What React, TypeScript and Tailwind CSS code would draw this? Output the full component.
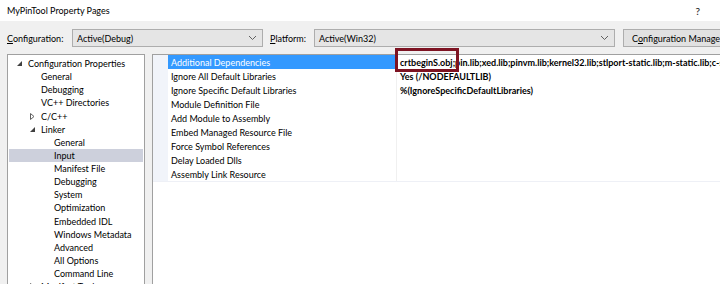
import React from "react";

const font = { fontFamily: 'Lato, "Noto Sans", sans-serif' };

function Chevron() {
  return (
    <svg width="9" height="6" viewBox="0 0 9 6" className="shrink-0">
      <path d="M1 1 L4.5 4.5 L8 1" fill="none" stroke="#606060" strokeWidth="1" />
    </svg>
  );
}

function Expanded() {
  return (
    <svg width="5" height="5" viewBox="0 0 5 5" className="shrink-0">
      <path d="M5 0 L5 5 L0 5 Z" fill="#404040" />
    </svg>
  );
}

function Collapsed() {
  return (
    <svg width="5" height="7" viewBox="0 0 5 7" className="shrink-0">
      <path d="M0.5 0.5 L4 3.5 L0.5 6.5 Z" fill="none" stroke="#606060" strokeWidth="1" />
    </svg>
  );
}

type TreeItem = { label: string; level: number; icon?: "exp" | "col"; selected?: boolean };

const tree: TreeItem[] = [
  { label: "Configuration Properties", level: 0, icon: "exp" },
  { label: "General", level: 1 },
  { label: "Debugging", level: 1 },
  { label: "VC++ Directories", level: 1 },
  { label: "C/C++", level: 1, icon: "col" },
  { label: "Linker", level: 1, icon: "exp" },
  { label: "General", level: 2 },
  { label: "Input", level: 2, selected: true },
  { label: "Manifest File", level: 2 },
  { label: "Debugging", level: 2 },
  { label: "System", level: 2 },
  { label: "Optimization", level: 2 },
  { label: "Embedded IDL", level: 2 },
  { label: "Windows Metadata", level: 2 },
  { label: "Advanced", level: 2 },
  { label: "All Options", level: 2 },
  { label: "Command Line", level: 2 },
  { label: "Manifest Tool", level: 1, icon: "col" },
];

const rows: { name: string; value: string }[] = [
  {
    name: "Additional Dependencies",
    value:
      "crtbeginS.obj;pin.lib;xed.lib;pinvm.lib;kernel32.lib;stlport-static.lib;m-static.lib;c-static.lib;os-apis.lib",
  },
  { name: "Ignore All Default Libraries", value: "Yes (/NODEFAULTLIB)" },
  { name: "Ignore Specific Default Libraries", value: "%(IgnoreSpecificDefaultLibraries)" },
  { name: "Module Definition File", value: "" },
  { name: "Add Module to Assembly", value: "" },
  { name: "Embed Managed Resource File", value: "" },
  { name: "Force Symbol References", value: "" },
  { name: "Delay Loaded Dlls", value: "" },
  { name: "Assembly Link Resource", value: "" },
];

export default function App() {
  return (
    <div
      className="relative w-[720px] h-[284px] overflow-hidden bg-[#f0f0f0] text-[9px] text-black leading-none"
      style={font}
    >
      {/* Title bar */}
      <div className="h-[21px] bg-white flex items-center justify-between pl-[7px] pr-[20px]">
        <span className="text-[9px]">MyPinTool Property Pages</span>
        <span className="text-[10px] font-semibold text-[#333]">?</span>
      </div>

      {/* Config row */}
      <div className="flex items-center h-[18px] mt-[8px] pl-[7px] whitespace-nowrap">
        <span className="w-[65px] shrink-0">
          <span className="underline">C</span>onfiguration:
        </span>
        <div className="w-[191px] shrink-0 h-[18px] border border-[#adadad] bg-[#e5e5e5] flex items-center justify-between pl-[4px] pr-[5px]">
          <span>Active(Debug)</span>
          <Chevron />
        </div>
        <span className="ml-[7px] w-[44px] shrink-0">
          <span className="underline">P</span>latform:
        </span>
        <div className="w-[301px] shrink-0 h-[18px] border border-[#adadad] bg-[#e5e5e5] flex items-center justify-between pl-[4px] pr-[5px]">
          <span>Active(Win32)</span>
          <Chevron />
        </div>
        <div className="ml-[8px] shrink-0 w-[130px] h-[18px] border border-[#adadad] bg-[#e1e1e1] flex items-center pl-[8px]">
          <span>
            C<span className="underline">o</span>nfiguration Manager...
          </span>
        </div>
      </div>

      {/* Panels */}
      <div className="flex mt-[7px] pl-[7px] gap-[7px] items-start">
        {/* Tree */}
        <div className="w-[138px] h-[260px] shrink-0 bg-white border border-[#a0a0a0] pt-[2px] px-[1px] overflow-hidden">
          {tree.map((t, i) => (
            <div
              key={i}
              className={`h-[13.125px] flex items-center whitespace-nowrap ${
                t.selected ? "bg-[#cdd0dc]" : ""
              }`}
            >
              <div
                className={`flex items-center w-[11px] shrink-0 ${
                  t.level === 0 ? "ml-[8px]" : t.level === 1 ? "ml-[21px]" : "ml-[34px]"
                }`}
              >
                {t.icon === "exp" ? <Expanded /> : t.icon === "col" ? <Collapsed /> : null}
              </div>
              <span>{t.label}</span>
            </div>
          ))}
        </div>

        {/* Grid */}
        <div className="w-[600px] h-[260px] shrink-0 bg-white border border-[#a0a0a0] overflow-hidden">
          <div className="flex border-b border-[#eef0f6]">
            <div className="w-[15px] shrink-0 bg-[#f1f4fa]" />
            <div className="flex-1">
              {rows.map((r, i) => (
                <div key={i} className="flex h-[14px] whitespace-nowrap">
                  <div
                    className={`w-[229px] shrink-0 flex items-center pl-[3px] border-r border-[#f0f0f0] ${
                      i === 0 ? "bg-[#3399ff] text-white" : ""
                    }`}
                  >
                    {r.name}
                  </div>
                  <div className="flex-1 flex items-center pl-[3px] font-bold overflow-hidden">
                    {r.value}
                  </div>
                </div>
              ))}
            </div>
          </div>
        </div>
      </div>

      {/* Annotation box */}
      <div className="absolute left-[395px] top-[48px] w-[64px] h-[24px] border-[3px] border-[#7d1322]" />
    </div>
  );
}
